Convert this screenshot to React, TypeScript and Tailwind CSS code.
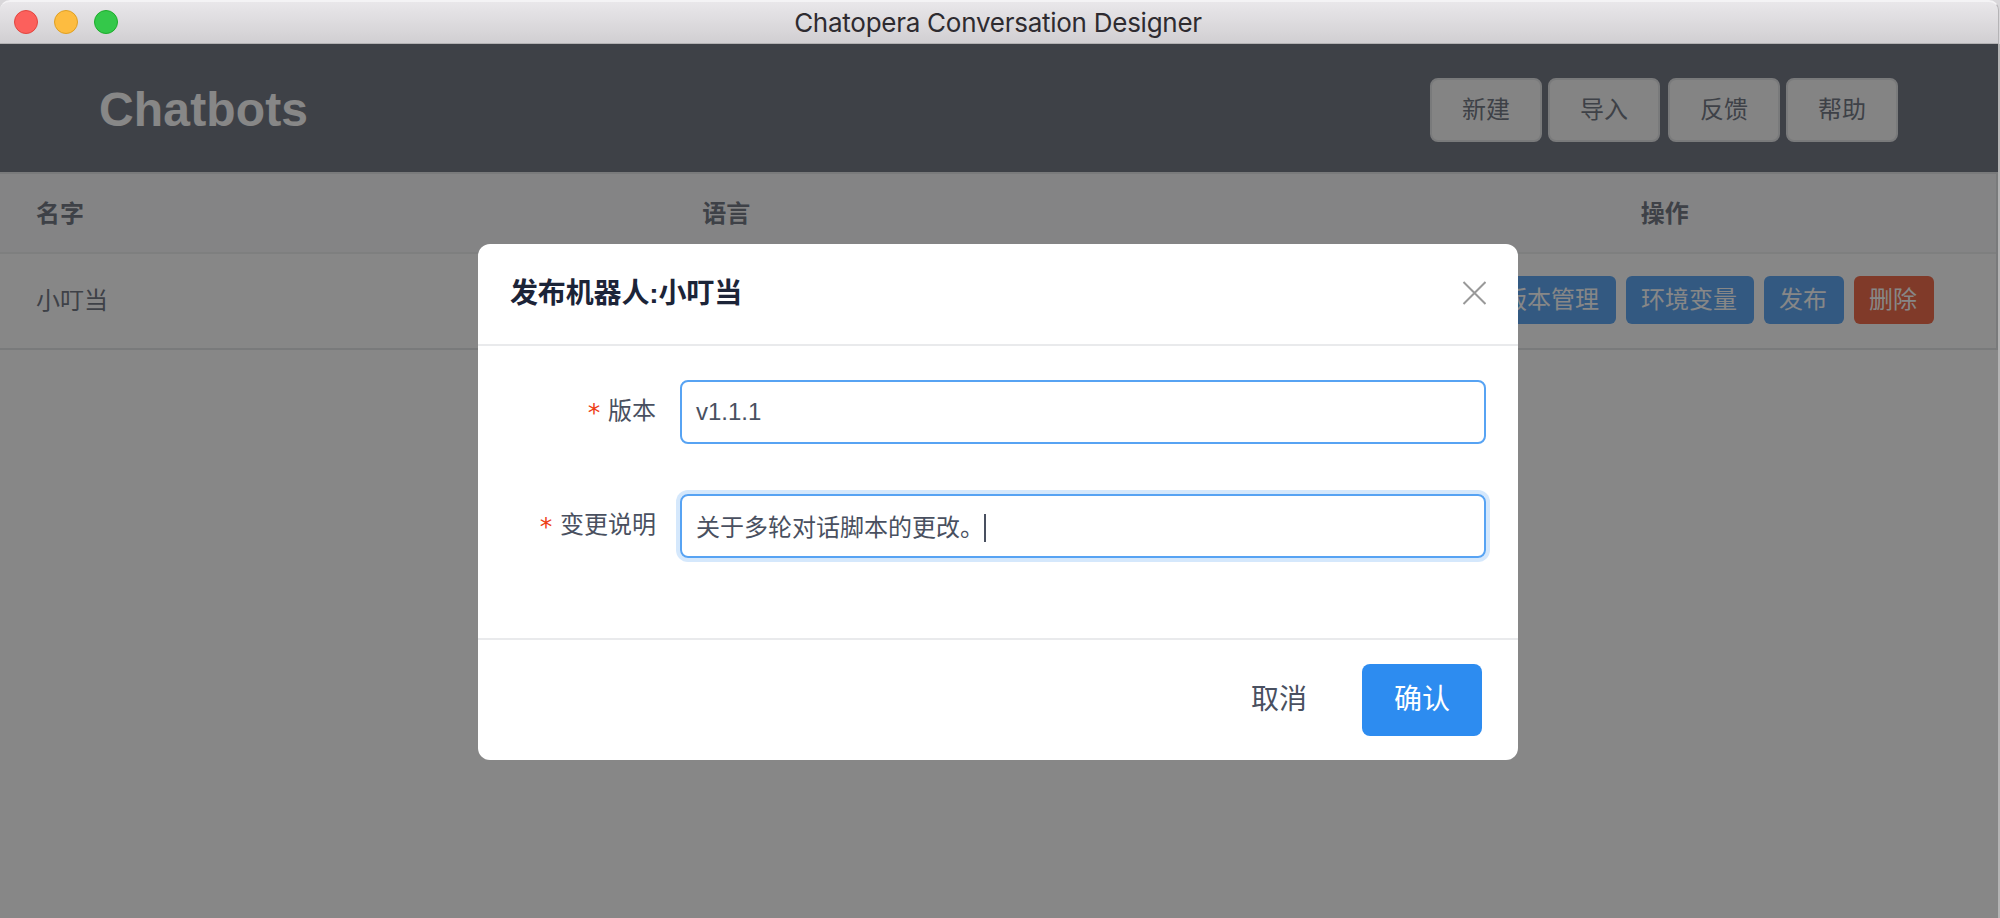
const actions = [
  { label: "版本管理", tone: "primary" },
  { label: "环境变量", tone: "primary" },
  { label: "发布", tone: "primary" },
  { label: "删除", tone: "danger" },
];

function TitleBar() {
  return (
    <div className="relative flex h-11 items-center bg-[#d9d7da]">
      <div className="flex h-11 w-[1999px] items-center rounded-t-[10px] border-t-2 border-r border-b border-t-[#f4f3f5] border-r-[#b5b4b6] border-b-[#b2b1b3] bg-linear-to-b from-[#e9e7ea] to-[#d1cfd2] pl-[14px]">
        <div className="-mt-px flex gap-4">
          <span className="size-6 rounded-full border border-[#e2463f] bg-[#fc605c]" />
          <span className="size-6 rounded-full border border-[#dfa023] bg-[#fdbc40]" />
          <span className="size-6 rounded-full border border-[#1dad2b] bg-[#34c84a]" />
        </div>
        <h1 className="mr-[120px] flex-1 text-center font-['Inter',sans-serif] text-[26px] leading-[40px] tracking-[-0.26px] text-[#2e2b30]">
          Chatopera Conversation Designer
        </h1>
      </div>
    </div>
  );
}

function HeaderButton({ label }: { label: string }) {
  return (
    <button className="flex h-16 w-28 items-center justify-center rounded-lg border-2 border-[#dddee1] bg-[#f7f7f7] text-2xl leading-none text-[#495060]">
      {label}
    </button>
  );
}

function Field({ label, value, focused }: { label: string; value: string; focused?: boolean }) {
  return (
    <label className="flex h-16">
      <span className="flex h-[61px] w-[170px] items-center justify-end pr-6 text-2xl leading-none text-[#495060]">
        <span className="mr-2 flex w-3 justify-center pt-1 font-['DejaVu_Sans_Mono',monospace] text-[25px] leading-none text-[#ed3f14]">
          *
        </span>
        {label}
      </span>
      <span
        className={
          focused
            ? "flex w-[806px] items-center rounded-lg border-2 border-[#57a3f3] px-[14px] pt-[3px] text-2xl leading-none text-[#495060] shadow-[0_0_0_4px_rgba(45,140,240,0.2)]"
            : "flex w-[806px] items-center rounded-lg border-2 border-[#57a3f3] px-[14px] text-2xl leading-none text-[#495060]"
        }
      >
        {value}
        {focused && <span className="h-7 w-0.5 bg-[#495060]" />}
      </span>
    </label>
  );
}

function PublishDialog() {
  return (
    <section className="absolute top-[200px] left-[478px] flex h-[516px] w-[1040px] flex-col rounded-xl bg-white">
      <header className="flex h-[102px] items-center justify-between border-b-2 border-[#e9eaec] pr-8 pl-8">
        <h2 className="text-[28px] leading-none font-bold tracking-[-0.15px] text-[#1c2438]">发布机器人:小叮当</h2>
        <svg width="24" height="24" viewBox="0 0 24 24" className="mb-[3px]" fill="none" stroke="#999" strokeWidth="2">
          <path d="M1.5 1 23.5 23M23.5 1 1.5 23" />
        </svg>
      </header>
      <div className="flex h-[292px] flex-col gap-[50px] px-8 pt-[34px]">
        <Field label="版本" value="v1.1.1" />
        <Field label="变更说明" value="关于多轮对话脚本的更改。" focused />
      </div>
      <footer className="flex flex-1 items-center justify-end gap-2 border-t-2 border-[#e9eaec] pr-9">
        <button className="flex h-[72px] w-[120px] items-center justify-center pl-0.5 text-[28px] leading-none text-[#495060]">
          取消
        </button>
        <button className="ml-4 flex h-[72px] w-[120px] items-center justify-center rounded-lg bg-[#2d8cf0] text-[28px] leading-none text-white">
          确认
        </button>
      </footer>
    </section>
  );
}

export default function App() {
  return (
    <div className="flex h-[918px] w-[2000px] flex-col overflow-hidden bg-[#b4b4b4] font-['Liberation_Sans','Noto_Sans_CJK_SC',sans-serif]">
      <TitleBar />
      <div className="relative w-[1998px] flex-1 bg-white">
        <div className="flex h-32 items-center justify-between bg-[#495060] pr-[100px] pl-[98px]">
          <h2 className="pt-1 pl-px text-5xl leading-none font-bold tracking-[0.15px] text-white">Chatbots</h2>
          <nav className="flex gap-1.5 pt-1">
            <HeaderButton label="新建" />
            <HeaderButton label="导入" />
            <div className="ml-0.5 flex gap-1.5">
              <HeaderButton label="反馈" />
              <HeaderButton label="帮助" />
            </div>
          </nav>
        </div>
        <div className="border-t-2 border-r-2 border-b-2 border-[#dddee1] text-2xl leading-none text-[#495060]">
          <div className="grid h-20 grid-cols-3 items-center border-b-2 border-[#e9eaec] bg-[#f8f8f9] pt-0.5 font-bold">
            <div className="pl-9">名字</div>
            <div className="pl-[37px]">语言</div>
            <div className="pl-[3px] text-center">操作</div>
          </div>
          <div className="flex h-[94px] items-center justify-between pr-[62px] pl-9">
            <div>小叮当</div>
            <div className="-mt-0.5 flex gap-2.5">
              {actions.map((a) => (
                <button
                  key={a.label}
                  className={
                    a.tone === "danger"
                      ? "flex h-12 items-center rounded-md bg-[#ed3f14] pr-[17px] pl-[15px] text-white"
                      : "flex h-12 items-center rounded-md bg-[#2d8cf0] pr-[17px] pl-[15px] text-white"
                  }
                >
                  {a.label}
                </button>
              ))}
            </div>
          </div>
        </div>
        <div className="absolute inset-0 bg-[#373737]/60" />
        <PublishDialog />
      </div>
    </div>
  );
}
